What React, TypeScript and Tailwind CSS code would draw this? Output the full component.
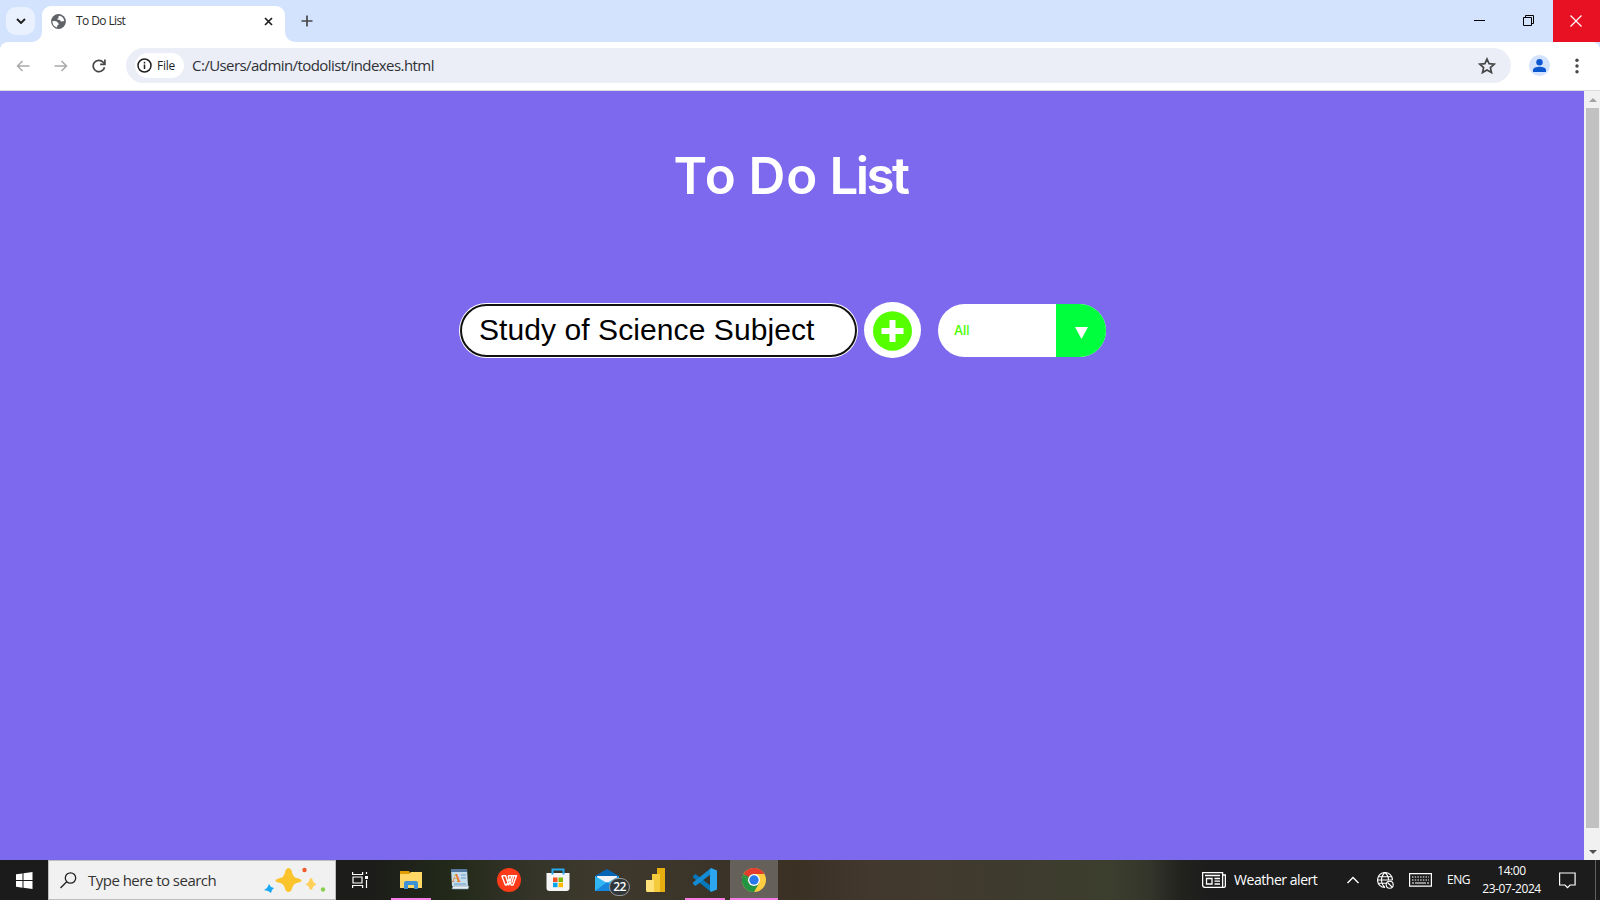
import React from "react";

function TabStrip() {
  return (
    <div className="flex h-[42px] items-end bg-[#d3e3fd]">
      <div className="flex h-[42px] w-[42px] items-center pl-[6px]">
        <div className="flex h-7 w-[29px] items-center justify-center rounded-[10px] bg-[#e9f1fe]">
          <svg width="10" height="6" viewBox="0 0 10 6" fill="none" stroke="#1f1f1f" strokeWidth="1.900"><path d="M1 1l4 4 4-4" /></svg>
        </div>
      </div>
      <div className="relative flex h-9 w-[243px] items-center rounded-t-[9px] bg-white pl-[9px] pb-[6px]">
        <svg className="absolute -left-[10px] bottom-0" width="10" height="10"><path d="M10 0v10H0A10 10 0 0 0 10 0" fill="#fff" /></svg>
        <svg className="absolute -right-[10px] bottom-0" width="10" height="10"><path d="M0 0v10h10A10 10 0 0 1 0 0" fill="#fff" /></svg>
        <svg width="15" height="15" viewBox="0 0 15 15">
          <circle cx="7.500" cy="7.500" r="7.400" fill="#5f6368" />
          <path d="M8.700 1.700c-1 .4-1.600 1.200-1.300 1.800.6.3.2 1-.6 1.100-.8.2-.5 1.300.2 1.200 1.300-.1 2.200.2 2.500 1.100.8.9 2.100.3 3.700.2A6 6 0 0 0 8.700 1.700zM1.500 7c1.700 0 4.300-.1 4.900 1.200.5.900 1.500 1 1.400 2-.1.900-1.500.8-1.700 1.700v1.500A6.100 6.100 0 0 1 1.500 7z" fill="#fff" />
        </svg>
        <span className="ml-[10px] w-[179px] text-[12px] leading-4 tracking-[-0.6px] text-[#2a2a2a]">To Do List</span>
        <svg className="ml-[9px]" width="9" height="9" viewBox="0 0 9 9" stroke="#1f1f1f" strokeWidth="1.700"><path d="M1 1l7 7M8 1l-7 7" /></svg>
      </div>
      <svg className="mb-[15px] ml-[16px]" width="12" height="12" viewBox="0 0 12 12" stroke="#474747" strokeWidth="1.700"><path d="M6 .5v11M.5 6h11" /></svg>
      <div className="grow" />
      <div className="flex h-[42px]">
        <div className="flex w-[49px] items-center justify-center pb-[2px]"><div className="h-px w-[11px] bg-black" /></div>
        <div className="flex w-[49px] items-center justify-center pb-px">
          <svg width="12" height="12" viewBox="0 0 12 12" fill="none" stroke="#000"><path d="M.5 2.500h8v8h-8zM2.500 2.500v-2h8v8h-2" /></svg>
        </div>
        <div className="flex w-[47px] items-center justify-center bg-[#e81123] pr-px pb-px">
          <svg width="12" height="12" viewBox="0 0 12 12" stroke="#fff" strokeWidth="1.200"><path d="M.5.5l11 11M11.500.5l-11 11" /></svg>
        </div>
      </div>
    </div>
  );
}

function Toolbar() {
  return (
    <div className="bg-[#d3e3fd]">
      <div className="flex h-[49px] items-center rounded-t-[8px] border-b border-[#dcdce0] bg-white pb-px pl-[16px]">
        <svg width="14" height="12" viewBox="0 0 14 12" fill="none" stroke="#a9a9ab" strokeWidth="1.500"><path d="M13.500 6H1.500M6.500 1l-5 5 5 5" /></svg>
        <svg className="ml-[24px]" width="14" height="12" viewBox="0 0 14 12" fill="none" stroke="#a9a9ab" strokeWidth="1.500"><path d="M.5 6h12M7.500 1l5 5-5 5" /></svg>
        <svg className="ml-[24px]" width="14" height="14" viewBox="0 0 14 14" fill="none" stroke="#474747" strokeWidth="1.700"><path d="M12.500 8.200A5.700 5.700 0 1 1 11.200 3.200L12.500 4.700" /><path d="M12.900.6v4.800H8.200" /></svg>
        <div className="ml-[20px] flex h-[35px] w-[1385px] items-center rounded-full bg-[#ebeef7] pl-[9px]">
          <div className="flex h-[25px] w-[49px] items-center rounded-full bg-white pl-[2px]">
            <svg width="15" height="15" viewBox="0 0 15 15" fill="none" stroke="#1f1f1f" strokeWidth="1.500"><circle cx="7.500" cy="7.500" r="6.500" /><path d="M7.500 6.500v4.500M7.500 3.800v1.600" /></svg>
            <span className="ml-[5px] text-[12px] leading-4 font-medium tracking-[-0.25px] text-[#1f1f1f]">File</span>
          </div>
          <span className="ml-[8px] pb-[2px] text-[15px] leading-5 tracking-[-0.57px] text-[#303136]">C:/Users/admin/todolist/indexes.html</span>
          <div className="grow" />
          <svg className="mr-[15px]" width="18" height="18" viewBox="0 0 18 18" fill="none" stroke="#474747" strokeWidth="1.700"><path d="M9 2l2.100 4.700 5.100.5-3.800 3.400 1.100 5L9 13l-4.500 2.600 1.100-5L1.800 7.200l5.100-.5z" /></svg>
        </div>
        <div className="ml-[18px] flex h-[21px] w-[21px] items-center justify-center rounded-full bg-[#d3e3fd]">
          <svg width="13" height="13" viewBox="0 0 13 13" fill="#0b57d0"><circle cx="6.500" cy="3.300" r="3.200" /><path d="M0 13v-2c0-2 3.500-3.200 6.500-3.200s6.500 1.200 6.500 3.200v2z" /></svg>
        </div>
        <svg className="ml-[25px]" width="4" height="16" viewBox="0 0 4 16" fill="#474747"><circle cx="2" cy="2.200" r="1.700" /><circle cx="2" cy="8" r="1.700" /><circle cx="2" cy="13.800" r="1.700" /></svg>
      </div>
    </div>
  );
}

function Page() {
  return (
    <div className="flex h-[769px]">
      <main className="w-[1584px] bg-[#7d69ee]">
        <h1 className="h-[212px] pt-[54px] pr-[3px] text-center font-['Inter'] text-[51px] leading-[62px] font-semibold tracking-[-1.7px] text-white">
          <span className="tracking-[1.5px]">To</span> <span className="tracking-[1px]">Do</span> <span className="tracking-[-2.6px]">List</span>
        </h1>
        <div className="flex items-start pl-[459px]">
          <div className="h-[55px] w-[399px] rounded-full bg-white p-px">
            <div className="flex h-full w-full items-center rounded-full border-2 border-[#101010] pb-[2px] pl-[17px] font-['Liberation_Sans'] text-[30px] leading-[34px] tracking-[0.08px] whitespace-nowrap text-black">Study of Science Subject</div>
          </div>
          <div className="-mt-px ml-[6px] flex h-[56px] w-[57px] items-center justify-center rounded-full bg-white">
            <svg className="mt-px" width="39" height="40" viewBox="0 0 39 40"><ellipse cx="19.500" cy="20" rx="19.500" ry="19.800" fill="#55ff00" /><path d="M16.500 9h6v8h8v6h-8v8h-6v-8h-8v-6h8z" fill="#fff" /></svg>
          </div>
          <div className="mt-px ml-[17px] flex h-[53px] w-[168px] overflow-hidden rounded-full bg-white">
            <div className="w-[118px] pt-[17px] pl-[16px] font-['Inter'] text-[13px] leading-[18px] font-medium tracking-[-0.1px] text-[#4bff00]">All</div>
            <div className="flex w-[50px] items-center justify-center bg-[#00ff3c]">
              <svg className="mt-[5px]" width="13" height="12" viewBox="0 0 13 12"><path d="M0 0h13L6.500 12z" fill="#fff" /></svg>
            </div>
          </div>
        </div>
      </main>
      <div className="flex w-4 flex-col items-center bg-[#f1f1f1] pl-px">
        <div className="flex h-[17px] items-center"><svg width="8" height="4"><path d="M0 4h8L4 0z" fill="#a3a3a3" /></svg></div>
        <div className="h-[720px] w-[13px] bg-[#c1c1c1]" />
        <div className="flex grow items-end pb-[6px]"><svg width="8" height="4"><path d="M0 0h8L4 4z" fill="#505050" /></svg></div>
      </div>
    </div>
  );
}

function AppCell({ children, open, active }: { children: React.ReactNode; open?: boolean; active?: boolean }) {
  return (
    <div className={`relative flex h-10 items-center justify-center ${active ? "ml-px w-12 bg-[#65605a]" : "w-[49px]"}`}>
      {children}
      {(open || active) && <div className={`absolute bottom-0 h-[2px] bg-[#f97be8] ${active ? "w-12" : "w-10"}`} />}
    </div>
  );
}

function TaskbarApps() {
  return (
    <div className="flex">
      <AppCell open>
        <svg width="22" height="20" viewBox="0 0 22 20"><path d="M0 1h9l1 2v4H0z" fill="#e09c00" /><path d="M0 4h9l2-2h11v16H0z" fill="#ffd766" /><path d="M4 19v-6q0-2 2-2h10q2 0 2 2v6h-4v-4H8v4z" fill="#3d91d5" /></svg>
      </AppCell>
      <AppCell>
        <svg className="-mt-[2px]" width="20" height="22" viewBox="0 0 20 22"><path d="M1 1h16l1 17H2z" fill="#c5dcea" /><path d="M1 1h16v3H1z" fill="#54789d" /><path d="M3 18h16l-1 3H2z" fill="#e8f0f5" stroke="#7895ac" strokeWidth=".6" /><text x="2" y="14" fontFamily="Liberation Serif" fontWeight="bold" fontSize="12" fill="#e87921">A</text><path d="M11 7h5M11 10h5M4 16h12" stroke="#6d9bc6" strokeWidth="1.200" /></svg>
      </AppCell>
      <AppCell>
        <svg width="24" height="24" viewBox="0 0 24 24"><circle cx="12" cy="12" r="12" fill="#fb3a19" /><path d="M4.800 7.800h3.800l3.100 9.200 3-8.500M4.800 7.800L8.300 17h1.400l2.600-7M11 7.800h8.500L16 17h-1.800L11 7.800M19.500 7.800h-2.700l-2 7" fill="none" stroke="#fff" strokeWidth="1.400" strokeLinejoin="round" /></svg>
      </AppCell>
      <AppCell>
        <svg width="24" height="24" viewBox="0 0 24 24"><path d="M6.500 6V1.500h11V6" fill="none" stroke="#27a9ee" strokeWidth="2" /><path d="M.5 5h23v15q0 3-3 3h-17q-3 0-3-3z" fill="#f5f5f5" /><path d="M6.500 5v1.500M17.500 5v1.500" stroke="#27a9ee" strokeWidth="2" /><path d="M7 9.500h4.500V14H7z" fill="#f25022" /><path d="M12.500 9.500H17V14h-4.500z" fill="#7fba00" /><path d="M7 14.700h4.500v4.500H7z" fill="#00a4ef" /><path d="M12.500 14.700H17v4.500h-4.500z" fill="#ffb900" /></svg>
      </AppCell>
      <AppCell>
        <svg width="24" height="22" viewBox="0 0 24 22"><path d="M0 7L12 0l12 7v15H0z" fill="#0864b5" /><path d="M2 7h20v6l-10 5L2 13z" fill="#f4f4f4" /><path d="M0 7l12 7 12-7v15H0z" fill="#31b6f4" /><path d="M0 22l12-9 12 9z" fill="#1686de" /></svg>
        <div className="absolute top-[18px] left-[27px] flex h-[18px] w-[21px] items-center justify-center rounded-full border border-[#999] bg-[#30373b] text-[12px] leading-none font-semibold tracking-[-0.5px] text-white">22</div>
      </AppCell>
      <AppCell>
        <svg width="20" height="24" viewBox="0 0 20 24"><path d="M11 0h8v24h-8z" fill="#e6ad10" /><path d="M6 6h8v18H6z" fill="#f4cb3d" /><path d="M0 12h8v12H1l-1-1z" fill="#ffe17a" /></svg>
      </AppCell>
      <AppCell open>
        <svg width="24" height="24" viewBox="0 0 24 24"><path d="M0 8l2.500-2L18 18v6L0 9.500z" fill="#0877b9" /><path d="M0 16l2.500 2L18 6V0L0 14.500z" fill="#148bd2" /><path d="M18 0l6 2.500v19L18 24l-1-2V2z" fill="#2ca7ef" /></svg>
      </AppCell>
      <AppCell active>
        <svg width="24" height="24" viewBox="0 0 24 24"><circle cx="12" cy="12" r="12" fill="#ffcd40" /><path d="M1.600 6A12 12 0 0 0 12 24l5.200-9L12 12 6.800 15z" fill="#229342" /><path d="M1.600 6L6.800 15 12 6z" fill="#229342" /><path d="M1.600 6A12 12 0 0 1 22.400 6H12A6 6 0 0 0 6.800 9z" fill="#e33b2e" /><circle cx="12" cy="12" r="6" fill="#fff" /><circle cx="12" cy="12" r="4.700" fill="#2878ea" /></svg>
      </AppCell>
    </div>
  );
}

function Taskbar() {
  return (
    <div className="flex h-10 items-center bg-[linear-gradient(90deg,#1b1b1b_0px,#1c1c1a_370px,#222919_450px,#343428_530px,#3e392d_600px,#3b3328_720px,#3b3024_800px,#42382e_870px,#423a2e_930px,#3e3b2e_1000px,#3c3e2e_1110px,#33352a_1150px,#22231e_1180px,#1c1c1c_1210px,#1c1c1c_1600px)] text-white">
      <div className="flex w-12 items-center justify-center">
        <svg width="17" height="17" viewBox="0 0 17 17" fill="#fff"><path d="M0 2.200l6.500-.8v6.700H0zM7.500 1.200L16.500 0v8.100h-9zM0 9.100h6.500v6.600L0 14.800zM7.500 9.100h9V17l-9-1.200z" /></svg>
      </div>
      <div className="flex h-10 w-[288px] items-center border border-[#bdbdbd] bg-[#f1f1f1] pl-[11px]">
        <svg width="17" height="17" viewBox="0 0 17 17" fill="none" stroke="#222" strokeWidth="1.300"><circle cx="10.500" cy="6" r="5.200" /><path d="M6.700 9.700L.5 16" /></svg>
        <span className="ml-[11px] w-[176px] text-[15px] leading-5 tracking-[-0.52px] text-[#333]">Type here to search</span>
        <svg width="62" height="26" viewBox="0 0 62 26"><path d="M24.500 1q3 0 4 6 1 3 4 4 5 1 5 2.500T32.500 16q-3 1-4 4-1 5-4 5t-4-5q-1-3-4-4-5-1-5-2.500t5-2.500q3-1 4-4 1-6 4-6z" fill="#fcc42c" /><path d="M47 11q1.500 0 2 3 .5 2 3 3 .5.500 0 1-2.500.5-3 2-.5 3-2 3t-2-3q-.5-1.500-3-2-.5-.5 0-1 2.500-1 3-3 .5-3 2-3z" fill="#ffd05a" /><path d="M5 17l2 3 3 1-2 2-1 3-3-2-4-1 3-2z" fill="#18a8f4" /><circle cx="40.500" cy="3" r="2.200" fill="#f15b2b" /><circle cx="59" cy="22.500" r="2.200" fill="#8bce4f" /></svg>
      </div>
      <div className="flex w-[50px] items-center justify-center pr-[1px]">
        <svg width="17" height="16" viewBox="0 0 17 16" fill="none" stroke="#fff" strokeWidth="1.200"><path d="M1 5h9v6H1zM.6 0v2.500h10V0M.6 16v-2.500h10V16M14.500 0v2M14.500 8v8" /><path d="M13 4h3v3h-3z" fill="#fff" stroke="none" /></svg>
      </div>
      <TaskbarApps />
      <div className="grow" />
      <div className="flex w-[398px] items-center">
        <svg width="24" height="16" viewBox="0 0 24 16" fill="none" stroke="#fff" strokeWidth="1.300"><path d="M.6.6h20v14.800H3Q.6 15.400.6 13zM20.600 3h2.800v10.500q0 1.900-1.900 1.900H19M4.500 6.500h5.500v5.500H4.500zM3 3.500h15M12.500 6.500H18M12.500 9.200H18M12.500 12H18" /></svg>
        <span className="ml-[8px] w-[113px] text-[14px] leading-5 tracking-[-0.45px] whitespace-nowrap">Weather alert</span>
        <svg width="12" height="8" viewBox="0 0 12 8" fill="none" stroke="#fff" strokeWidth="1.400"><path d="M.5 7L6 1.500 11.500 7" /></svg>
        <svg className="ml-[18px]" width="17" height="17" viewBox="0 0 17 17" fill="none" stroke="#fff" strokeWidth="1.100"><path d="M15.500 8A7.500 7.500 0 1 0 8 15.500M8 .5Q4.500 3.500 4.500 8T8 15.500M8 .5Q11.500 3.500 11.500 8M1.500 4.700h13M1.500 11.200H9M.5 8h15" /><circle cx="12.700" cy="12.700" r="3.500" /><path d="M10.500 10.500l4.500 4.500" /></svg>
        <svg className="ml-[15px]" width="23" height="14" viewBox="0 0 23 14" fill="none" stroke="#fff" strokeWidth="1.200"><path d="M.6.6h21.800v12.600H.6z" /><path d="M3 4h17M3 7h17" strokeDasharray="1.500 1.200" /><path d="M3 10h2M6 10h11M18 10h2" /></svg>
        <span className="ml-[15px] w-[35px] text-[12px] leading-4 tracking-[-0.5px]">ENG</span>
        <div className="w-[59px] text-center text-[12px] leading-[18px] tracking-[-0.4px] whitespace-nowrap"><div>14:00</div><div>23-07-2024</div></div>
        <svg className="ml-[18px]" width="17" height="17" viewBox="0 0 17 17" fill="none" stroke="#fff" strokeWidth="1.200"><path d="M.6 1h15.500v12h-5L8.500 15.700 6 13H.6z" /></svg>
        <div className="grow" />
        <div className="mr-[4px] h-10 w-px bg-[#606060]" />
      </div>
    </div>
  );
}

export default function App() {
  return (
    <div className="h-[900px] w-[1600px] overflow-hidden font-['Open_Sans',sans-serif]">
      <TabStrip />
      <Toolbar />
      <Page />
      <Taskbar />
    </div>
  );
}
